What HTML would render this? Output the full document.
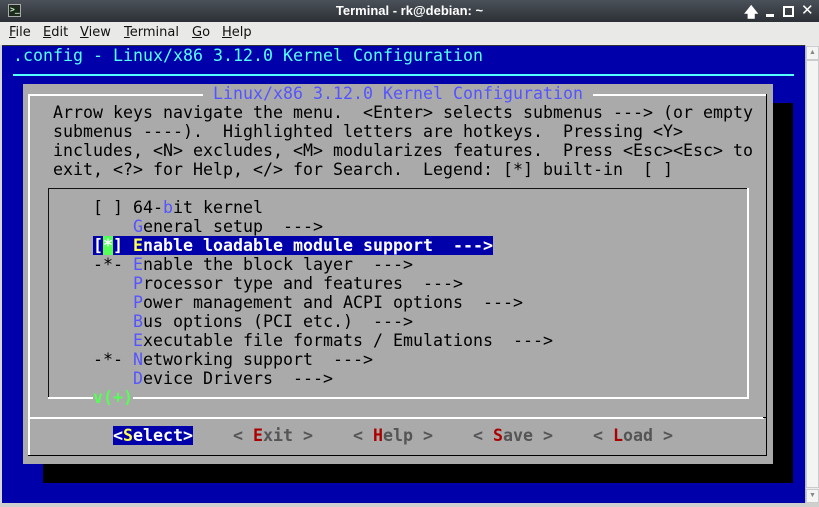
<!DOCTYPE html>
<html><head><meta charset="utf-8"><style>
*{margin:0;padding:0;box-sizing:border-box}
body{width:819px;height:507px;overflow:hidden;background:#d6d6d4;position:relative;font-family:"Liberation Sans","DejaVu Sans",sans-serif}
.a{position:absolute}
.t{position:absolute;font-family:"DejaVu Sans Mono","Liberation Mono",monospace;font-size:16.61px;line-height:19px;height:19px;white-space:pre;color:#000}
.h{color:#5555ff}
.b{font-weight:bold}
</style></head><body>
<div class="a" style="left:0;top:0;width:819px;height:22px;background:linear-gradient(#4b5159,#2c3036)"></div>
<div class="a" style="left:8px;top:4px;width:13px;height:13px;background:#1e2a1e;border:1px solid #aaa"></div>
<div class="a" style="left:10px;top:5px;color:#cfc;font:bold 8px 'DejaVu Sans Mono',monospace">&gt;_</div>
<div class="a" style="left:0;top:3px;width:819px;text-align:center;color:#fff;font-size:13px;font-weight:bold">Terminal - rk@debian: ~</div>
<div class="a" style="left:744px;top:2px;color:#fff;font:bold 14px 'DejaVu Sans',sans-serif">🡅</div>
<div class="a" style="left:766px;top:14px;width:8px;height:3px;background:#fff"></div>
<div class="a" style="left:783px;top:6px;width:11px;height:11px;border:2px solid #fff"></div>
<div class="a" style="left:801px;top:1px;color:#fff;font:bold 15px 'DejaVu Sans',sans-serif">✕</div>
<div class="a" style="left:0;top:22px;width:819px;height:23px;background:#e9e9e7"></div>
<div class="a" style="left:9px;top:25px;font:13px 'DejaVu Sans',sans-serif;color:#111">
<span style="position:absolute;left:0"><u>F</u>ile</span><span style="position:absolute;left:34px"><u>E</u>dit</span><span style="position:absolute;left:71px"><u>V</u>iew</span><span style="position:absolute;left:115px"><u>T</u>erminal</span><span style="position:absolute;left:183px"><u>G</u>o</span><span style="position:absolute;left:213px"><u>H</u>elp</span></div>
<div class="a" style="left:2px;top:45px;width:803px;height:459px;background:#0000aa;border-top:1px solid #333"></div>
<div class="a" style="left:805px;top:45px;width:14px;height:459px;background:#ececea;border-left:1px solid #bbb"></div>
<div class="a" style="left:806px;top:46px;width:13px;height:14px;background:#f4f4f2;border:1px solid #ccc;font-size:7px;color:#888;text-align:center;line-height:12px">▲</div>
<div class="a" style="left:806px;top:60px;width:13px;height:428px;background:#f4f4f2;border:1px solid #ccc"></div>
<div class="a" style="left:806px;top:489px;width:13px;height:14px;background:#f4f4f2;border:1px solid #ccc;font-size:7px;color:#888;text-align:center;line-height:12px">▼</div>
<div class="a" style="left:0;top:503px;width:819px;height:4px;background:#cfcfcd"></div>

<div class="t" style="left:13px;top:46px;color:#55ffff">.config - Linux/x86 3.12.0 Kernel Configuration</div>
<div class="a" style="left:13px;top:74px;width:781px;height:2px;background:#55ffff"></div>
<div class="a" style="left:43px;top:103px;width:750px;height:380px;background:#000"></div>
<div class="a" style="left:23px;top:84px;width:750px;height:380px;background:#aaaaaa"></div>
<div class="a" style="left:28px;top:94px;width:739px;height:2px;background:#fff"></div>
<div class="a" style="left:28px;top:94px;width:2px;height:362px;background:#fff"></div>
<div class="a" style="left:766px;top:94px;width:1px;height:362px;background:#000"></div>
<div class="a" style="left:28px;top:455px;width:739px;height:1px;background:#000"></div>
<div class="a" style="left:28px;top:417px;width:736px;height:2px;background:#fff"></div>
<div class="a" style="left:763px;top:417px;width:4px;height:1px;background:#000"></div>
<div class="t h" style="left:203px;top:84px;background:#aaa;padding:0 10px">Linux/x86 3.12.0 Kernel Configuration</div>
<div class="t" style="left:53px;top:103px">Arrow keys navigate the menu.  &lt;Enter&gt; selects submenus ---&gt; (or empty</div>
<div class="t" style="left:53px;top:122px">submenus ----).  Highlighted letters are hotkeys.  Pressing &lt;Y&gt;</div>
<div class="t" style="left:53px;top:141px">includes, &lt;N&gt; excludes, &lt;M&gt; modularizes features.  Press &lt;Esc&gt;&lt;Esc&gt; to</div>
<div class="t" style="left:53px;top:160px">exit, &lt;?&gt; for Help, &lt;/&gt; for Search.  Legend: [*] built-in  [ ]</div>
<div class="a" style="left:48px;top:188px;width:700px;height:1px;background:#111"></div>
<div class="a" style="left:48px;top:188px;width:1px;height:210px;background:#111"></div>
<div class="a" style="left:48px;top:397px;width:701px;height:2px;background:#fff"></div>
<div class="a" style="left:747px;top:188px;width:2px;height:211px;background:#fff"></div>
<div class="t" style="left:93px;top:198px">[ ] 64-<span class="h">b</span>it kernel</div>
<div class="t" style="left:93px;top:217px">    <span class="h">G</span>eneral setup  ---&gt;</div>
<div class="t b" style="left:93px;top:236px;background:#0000aa;color:#fff;width:400px">[<span style="background:#55ff55">*</span>] <span style="color:#ffff55">E</span>nable loadable module support  ---&gt;</div>
<div class="t" style="left:93px;top:255px">-*- <span class="h">E</span>nable the block layer  ---&gt;</div>
<div class="t" style="left:93px;top:274px">    <span class="h">P</span>rocessor type and features  ---&gt;</div>
<div class="t" style="left:93px;top:293px">    <span class="h">P</span>ower management and ACPI options  ---&gt;</div>
<div class="t" style="left:93px;top:312px">    <span class="h">B</span>us options (PCI etc.)  ---&gt;</div>
<div class="t" style="left:93px;top:331px">    <span class="h">E</span>xecutable file formats / Emulations  ---&gt;</div>
<div class="t" style="left:93px;top:350px">-*- <span class="h">N</span>etworking support  ---&gt;</div>
<div class="t" style="left:93px;top:369px">    <span class="h">D</span>evice Drivers  ---&gt;</div>
<div class="t b" style="left:93px;top:388px;color:#55ff55;background:#aaa">v(+)</div>
<div class="t b" style="left:113px;top:426px;background:#0000aa;color:#fff">&lt;<span style="color:#ffff55">S</span>elect&gt;</div>
<div class="t b" style="left:233px;top:426px;color:#555">&lt; <span style="color:#aa0000">E</span>xit &gt;</div>
<div class="t b" style="left:353px;top:426px;color:#555">&lt; <span style="color:#aa0000">H</span>elp &gt;</div>
<div class="t b" style="left:473px;top:426px;color:#555">&lt; <span style="color:#aa0000">S</span>ave &gt;</div>
<div class="t b" style="left:593px;top:426px;color:#555">&lt; <span style="color:#aa0000">L</span>oad &gt;</div>
</body></html>
